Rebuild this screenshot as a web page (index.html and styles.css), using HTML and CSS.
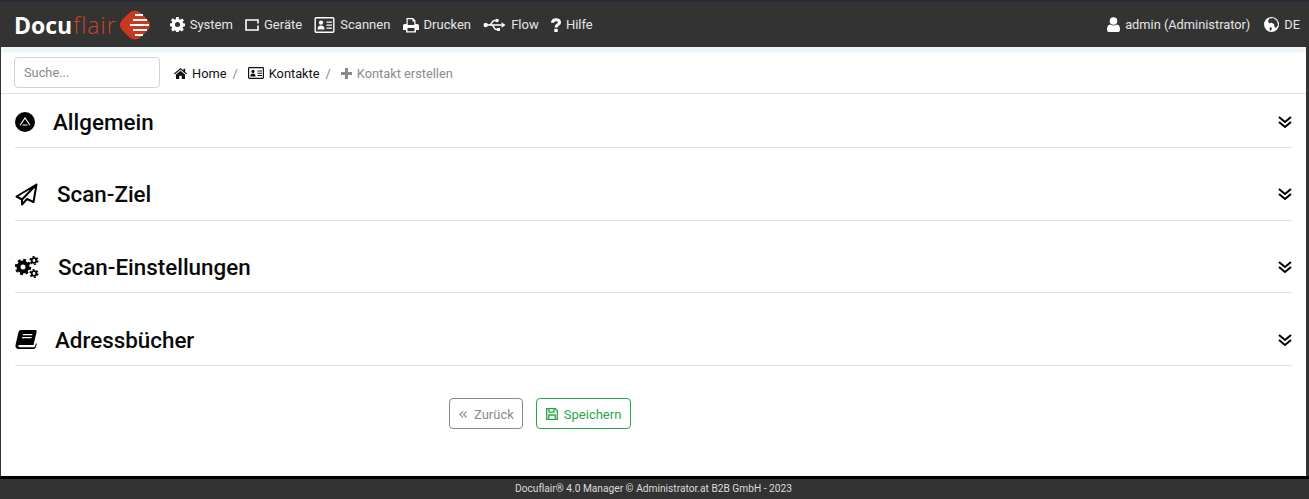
FILE: index.html
```html
<!DOCTYPE html>
<html>
<head>
    <title>Docuflair Manager</title>
    <meta charset="utf-8">
    <link rel="stylesheet" href="styles.css">
</head>
<body>
<div class="frame">
    <nav class="topbar">
        <a class="logo" href="#">
            <span class="logo-a">Docu</span><span class="logo-b">flair</span>
            <svg class="logo-mark" viewBox="0 0 30 30" width="30" height="30">
                <path d="M9 3Q15-2 21 3L28 10Q32 15 28 20L21 27Q15 32 9 27L2 20Q-2 15 2 10z" fill="#c8391f"/>
                <path d="M15 5h8M13 10h14M10 15h19M13 20h14M15 25h8" stroke="#fff" stroke-width="1.800"/>
            </svg>
        </a>
        <ul class="menu">
            <li>
                <svg class="ico" viewBox="0 0 16 16" width="15" height="15"><path fill="#fff" fill-rule="evenodd" d="M6.600 0h2.800l.4 2.300 1.200.5 1.900-1.300 2 2-1.400 1.900.5 1.200 2 .4v2.900l-2.100.4-.5 1.200 1.300 1.900-2 2-1.900-1.300-1.200.5-.4 2.300H6.600l-.4-2.300-1.200-.5-1.900 1.300-2-2 1.300-1.900-.5-1.200-1.900-.4V6.800l2-.4.500-1.200-1.400-1.900 2-2L5 2.800l1.200-.5zM8 5.300a2.700 2.700 0 1 0 0 5.400 2.700 2.700 0 0 0 0-5.400z"/></svg>
                System
            </li>
            <li>
                <svg class="ico" viewBox="0 0 14 12" width="14" height="12"><path fill="none" stroke="#fff" stroke-width="1.600" d="M1 1h12v10H1z"/><path stroke="#333" stroke-width="2" d="M13 4.500v2"/></svg>
                Geräte
            </li>
            <li>
                <svg class="ico" viewBox="0 0 20 16" width="21" height="16"><rect x=".7" y=".7" width="18.600" height="14.600" rx="1" fill="none" stroke="#fff" stroke-width="1.400"/><circle cx="6.500" cy="5.600" r="2.200" fill="#fff"/><path fill="#fff" d="M3 12.500q0-4 3.500-4t3.500 4zM12 4.500h5.500v1.300H12zM12 7.500h5.500v1.300H12zM12 10.500h5.500v1.300H12z"/></svg>
                Scannen
            </li>
            <li>
                <svg class="ico" viewBox="0 0 16 16" width="16" height="16"><path fill="#fff" fill-rule="evenodd" d="M3.500 1h6.500l2.500 2.500V7h1.500Q16 7 16 8.500V13h-3v2.500H3V13H0V8.500Q0 7 1.500 7H3.500zM4.700 2.200V8h6.600V4.500H9.500V2.200zM4.500 11v3.200h7V11z"/></svg>
                Drucken
            </li>
            <li>
                <svg class="ico" viewBox="0 0 22 14" width="23" height="14"><circle cx="2.200" cy="7" r="2.200" fill="#fff"/><path fill="none" stroke="#fff" stroke-width="1.500" d="M3 7h15M5.500 7Q7.500 7 8.500 4.500T12 2.500M8 7Q9.500 7 10.500 9.500T14 11.500"/><path fill="#fff" d="M18 4.300 22 7l-4 2.700z"/><circle cx="13.500" cy="2.500" r="1.800" fill="#fff"/><path fill="#fff" d="M13.500 10h3v3h-3z"/></svg>
                Flow
            </li>
            <li>
                <svg class="ico" viewBox="0 0 10 14" width="10" height="14"><path fill="none" stroke="#fff" stroke-width="3" d="M1.500 4.800Q1.600 1.700 5 1.700T8.500 4.400Q8.500 5.700 6.800 6.700 5 7.800 5 9.500"/><path fill="#fff" d="M3.300 10.800h3.400V14H3.300z"/></svg>
                Hilfe
            </li>
        </ul>
        <ul class="menu menu-right">
            <li>
                <svg class="ico" viewBox="0 0 13 15" width="13" height="15"><circle cx="6.500" cy="4" r="3.800" fill="#fff"/><path fill="#fff" d="M0 12.500Q0 8 3 7.500 6.500 9.500 10 7.500 13 8 13 12.500 13 15 11 15H2Q0 15 0 12.500z"/></svg>
                admin (Administrator)
            </li>
            <li>
                <svg class="ico" viewBox="0 0 15 15" width="15" height="15"><circle cx="7.500" cy="7.500" r="7.500" fill="#fff"/><path fill="#333" d="M5 1.500 9.500 1 13 4l1 4-2 3-1.500-1-.5-3-3-1.500-1 1-2-1.500zM6 10l2 1-1 3-1.500-1.500z"/></svg>
                DE
            </li>
        </ul>
    </nav>

    <main class="page">
        <div class="crumbbar">
            <input class="search" type="text" placeholder="Suche...">
            <ol class="crumbs">
                <li>
                    <svg class="ico" viewBox="0 0 13 11" width="13" height="11"><path fill="#111" d="M6.500 0 9.500 2.600V.8h1.700v3.300L13 5.600l-.7.800L6.500 1.500.7 6.400 0 5.600zM2 6.500 6.500 2.700 11 6.500V11H7.800V7.800H5.200V11H2z"/></svg>
                    Home
                </li>
                <li>
                    <svg class="ico" viewBox="0 0 16 12" width="16" height="12"><rect x=".6" y=".6" width="14.800" height="10.800" rx=".8" fill="none" stroke="#111" stroke-width="1.200"/><circle cx="5" cy="4.400" r="1.600" fill="#111"/><path fill="#111" d="M2.300 9.500q0-3 2.700-3t2.700 3zM9.500 3.500H14v1H9.500zM9.500 5.700H14v1H9.500zM9.500 8H14v1H9.500z"/></svg>
                    Kontakte
                </li>
                <li class="current">
                    <svg class="ico" viewBox="0 0 11 11" width="11" height="11"><path fill="#8b8b8b" d="M4 0h3v4h4v3H7v4H4V7H0V4h4z"/></svg>
                    Kontakt erstellen
                </li>
            </ol>
        </div>

        <section class="panel">
            <svg class="panel-ico" viewBox="0 0 20 20" width="20" height="20"><circle cx="10" cy="10" r="10" fill="#000"/><path fill="none" stroke="#fff" stroke-width="1.100" d="M5 13.300 10 6l5 7.300M7.500 13h5"/></svg>
            <h2 class="t1">Allgemein</h2>
            <svg class="chev" viewBox="0 0 14 14" width="14" height="14"><path fill="none" stroke="#000" stroke-width="2" d="M1 2l6 5 6-5M1 7l6 5 6-5"/></svg>
        </section>
        <section class="panel">
            <svg class="panel-ico" viewBox="0 0 23 23" width="23" height="23"><path fill="none" stroke="#000" stroke-width="2" stroke-linejoin="round" d="M21.500 1.500 1.500 13.500l5.500 3L21.500 1.500 18.500 19l-6.500-3-5 5.500v-5"/></svg>
            <h2 class="t2">Scan-Ziel</h2>
            <svg class="chev" viewBox="0 0 14 14" width="14" height="14"><path fill="none" stroke="#000" stroke-width="2" d="M1 2l6 5 6-5M1 7l6 5 6-5"/></svg>
        </section>
        <section class="panel">
            <svg class="panel-ico" viewBox="0 0 24 22" width="24" height="22"><g fill="none" stroke="#000"><circle cx="8" cy="11" r="4.500" stroke-width="4"/><circle cx="8" cy="11" r="7" stroke-width="2.400" stroke-dasharray="2.800 2.700"/><circle cx="19" cy="4.500" r="2.300" stroke-width="1.800"/><circle cx="19" cy="4.500" r="3.800" stroke-width="1.600" stroke-dasharray="2 2"/><circle cx="19" cy="17.500" r="2.300" stroke-width="1.800"/><circle cx="19" cy="17.500" r="3.800" stroke-width="1.600" stroke-dasharray="2 2"/></g></svg>
            <h2 class="t3">Scan-Einstellungen</h2>
            <svg class="chev" viewBox="0 0 14 14" width="14" height="14"><path fill="none" stroke="#000" stroke-width="2" d="M1 2l6 5 6-5M1 7l6 5 6-5"/></svg>
        </section>
        <section class="panel">
            <svg class="panel-ico" viewBox="0 0 22 19" width="22" height="19"><path fill="#000" d="M6 0h14.500Q22 0 21.700 1.500L18.500 15H4.500Q3 15 3.200 16T5 17.200H19q.8 0 1-.8L21 13l.8 1-1.200 3.700Q20 19 18.500 19H4Q0 19 .5 15L3.500 2Q4 0 6 0z"/><path fill="#fff" d="M8 4h9.500l-.3 1.300H7.700zM7.200 7h9.500l-.3 1.300H6.900z"/></svg>
            <h2 class="t4">Adressbücher</h2>
            <svg class="chev" viewBox="0 0 14 14" width="14" height="14"><path fill="none" stroke="#000" stroke-width="2" d="M1 2l6 5 6-5M1 7l6 5 6-5"/></svg>
        </section>

        <div class="actions">
            <button class="btn btn-back" type="button">
                <svg viewBox="0 0 10 10" width="9" height="9"><path fill="none" stroke="#8a8a8a" stroke-width="1.200" d="M4.500 1.500 1 5l3.500 3.500M8.500 1.500 5 5l3.500 3.500"/></svg>
                Zurück
            </button>
            <button class="btn btn-save" type="button">
                <svg viewBox="0 0 12 12" width="12" height="12"><path fill="none" stroke="#28a745" stroke-width="1.300" d="M.7.700h8.500l2.100 2.100v8.500H.7zM3 .7v3.500h5V.7M2.800 11.300V7h6.400v4.300"/></svg>
                Speichern
            </button>
        </div>
    </main>

    <footer class="foot">Docuflair® 4.0 Manager © Administrator.at B2B GmbH - 2023</footer>
</div>
</body>
</html>
```

FILE: styles.css
```css
html, body {
    margin: 0;
    height: 100%;
    background: #333;
}
body {
    font-family: Roboto, "Liberation Sans", sans-serif;
    font-size: 12.8px;
    overflow: hidden;
}
.frame {
    height: 499px;
    display: flex;
    flex-direction: column;
    border-top: 2px solid #2b2838;
    box-sizing: border-box;
}

/* top bar */
.topbar {
    height: 45px;
    box-sizing: border-box;
    flex: none;
    display: flex;
    align-items: center;
    padding: 0 9px 0 14px;
    color: #e6e6e6;
}
.logo {
    display: flex;
    align-items: center;
    text-decoration: none;
    font-family: "Open Sans", sans-serif;
    font-size: 23px;
    margin-right: 20px;
}
.logo-a {
    color: #fff;
    font-weight: 700;
}
.logo-b {
    color: #c8452a;
    font-weight: 300;
    letter-spacing: 1px;
    margin-left: 1px;
}
.logo-mark {
    margin-left: 3px;
}
.menu {
    list-style: none;
    display: flex;
    align-items: center;
    gap: 12.200px;
    margin: 0;
    padding: 0;
    font-size: 13px;
}
.menu li {
    display: flex;
    align-items: center;
    gap: 5px;
    white-space: nowrap;
}
.menu-right {
    margin-left: auto;
    gap: 14px;
    font-size: 12.800px;
}

/* content */
.page {
    flex: 1;
    margin: 0 3px 0 1px;
    background: linear-gradient(#edf5f8 5px, #fff 6px);
}
.crumbbar {
    height: 46px;
    display: flex;
    align-items: center;
    padding: 0 13px;
    border-bottom: 1px solid #e3e3e3;
}
.search {
    width: 146px;
    height: 31px;
    box-sizing: border-box;
    border: 1px solid #ced4da;
    border-radius: 4px;
    padding: 1px 9px 0;
    font: inherit;
    margin-top: 4px;
}
.search::placeholder {
    color: #8a8a8a;
}
.crumbs {
    list-style: none;
    display: flex;
    align-items: center;
    margin: 6px 0 0 14px;
    padding: 0;
    color: #111;
}
.crumbs li {
    display: flex;
    align-items: center;
    gap: 5px;
}
.crumbs li + li::before {
    content: "/";
    color: #888;
    margin-left: 6px;
    padding-right: 5px;
}
.crumbs .current {
    color: #8b8b8b;
}
.panel {
    height: 51px;
    padding-top: 2px;
    margin: 0 14px 18.700px 14px;
    display: flex;
    align-items: center;
    border-bottom: 1px solid #e3e3e3;
}
.panel:last-of-type {
    margin-bottom: 0;
}
.panel h2 {
    margin: 0;
    font-size: 22.400px;
    font-weight: 500;
    color: #0a0a0a;
}
.t1 { padding-left: 18px; }
.t2 { padding-left: 19px; }
.t3 { padding-left: 19px; }
.t4 { padding-left: 18px; }
.chev {
    margin-left: auto;
}
.actions {
    display: flex;
    gap: 13px;
    padding: 32px 0 0 448px;
}
.btn {
    height: 31px;
    background: #fff;
    border-radius: 4px;
    border: 1px solid;
    font-family: inherit;
    font-size: 13px;
    display: flex;
    align-items: center;
    gap: 5px;
    padding: 1px 9px 0;
}
.btn-back {
    color: #8a8a8a;
    border-color: #8a8a8a;
    gap: 6px;
    padding-right: 8px;
}
.btn-save {
    color: #28a745;
    border-color: #28a745;
    gap: 6px;
}

/* footer */
.foot {
    height: 23px;
    flex: none;
    border-top: 3px solid #000;
    box-sizing: border-box;
    text-align: center;
    padding-right: 2px;
    line-height: 20px;
    font-size: 10.200px;
    color: #ddd;
}
```
